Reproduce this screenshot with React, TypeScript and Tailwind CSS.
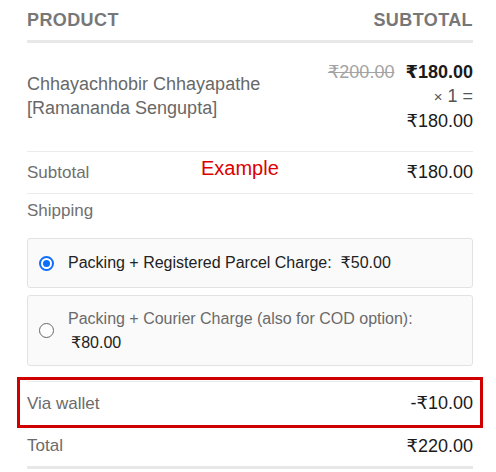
export default function App() {
  return (
    <div
      className="w-[496px] h-[472px] bg-white overflow-hidden pl-[27px] pr-[23px] text-[#222]"
      style={{ fontFamily: '"Liberation Sans", Arial, "DejaVu Sans", sans-serif' }}
    >
      {/* header */}
      <div className="flex justify-between items-center h-[43px] border-b-[3px] border-[#e8e8e8] text-[18px] font-bold uppercase tracking-[0.4px] text-[#777]">
        <span>Product</span>
        <span>Subtotal</span>
      </div>

      {/* product row */}
      <div className="flex justify-between items-center pt-[17px] pb-[18px] border-b border-[#ebebeb]">
        <div className="text-[18px] leading-[24px] text-[#686868] mt-[-1px]">
          Chhayachhobir Chhayapathe
          <br />
          [Ramananda Sengupta]
        </div>
        <div className="text-right text-[18px] leading-[24px]">
          <div>
            <span className="line-through text-[#a3a3a3] mr-[11px]">₹200.00</span>
            <span className="font-bold text-[#1a1a1a]">₹180.00</span>
          </div>
          <div className="text-[#555]">
            <span className="text-[15px]">×</span> 1 =
          </div>
          <div className="text-[#1a1a1a]">₹180.00</div>
        </div>
      </div>

      {/* subtotal */}
      <div className="relative flex justify-between items-center h-[42px] border-b border-[#ebebeb]">
        <span className="text-[17px] text-[#707070]">Subtotal</span>
        <span className="absolute left-[174px] top-[1px] text-[20px] text-[#dd0000]">Example</span>
        <span className="text-[18px] text-[#1a1a1a]">₹180.00</span>
      </div>

      {/* shipping */}
      <div className="pt-[5px] pb-[15px]">
        <div className="text-[17px] leading-[24px] text-[#707070]">Shipping</div>
        <div className="mt-[15px] flex flex-col gap-[7px]">
          <div className="flex items-center h-[50px] pl-[11px] border border-[#e2e2e2] rounded-[3px] bg-[#fafafa]">
            <span className="w-[15px] h-[15px] rounded-full border-[2px] border-[#0d6efd] bg-white flex items-center justify-center shrink-0">
              <span className="w-[7px] h-[7px] rounded-full bg-[#0d6efd]" />
            </span>
            <span className="ml-[14px] text-[16px] text-[#222]">
              Packing + Registered Parcel Charge:&nbsp; ₹50.00
            </span>
          </div>
          <div className="flex items-center h-[71px] pl-[11px] border border-[#e2e2e2] rounded-[3px] bg-[#fafafa]">
            <span className="w-[15px] h-[15px] rounded-full border border-[#666] bg-white shrink-0" />
            <span className="ml-[14px] text-[16px] leading-[24px] text-[#6a6a6a]">
              Packing + Courier Charge (also for COD option):
              <br />
              <span className="ml-[3px] text-[#222]">₹80.00</span>
            </span>
          </div>
        </div>
      </div>

      {/* via wallet */}
      <div className="relative flex justify-between items-center h-[44px] border-t border-[#ebebeb]">
        <span className="text-[17px] text-[#6b6b6b]">Via wallet</span>
        <span className="text-[18px] text-[#1a1a1a]">-₹10.00</span>
        <div className="absolute left-[-10px] right-[-10px] top-[-5px] bottom-[-3px] border-[3px] border-[#d00000]" />
      </div>

      {/* total */}
      <div className="flex justify-between items-center h-[44px] border-t border-[#ebebeb] border-b-[3px] border-b-[#e8e8e8]">
        <span className="text-[17px] text-[#6b6b6b]">Total</span>
        <span className="text-[18px] text-[#1a1a1a]">₹220.00</span>
      </div>
    </div>
  );
}
